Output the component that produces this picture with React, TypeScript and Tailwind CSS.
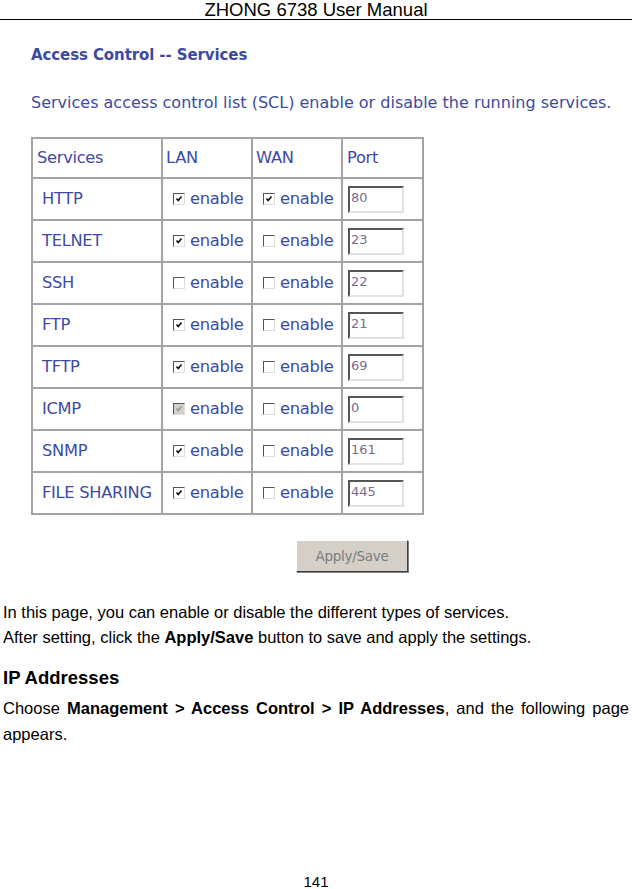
import React from "react"

type Row = { name: string; lan: "on" | "off" | "dis"; wan: boolean; port: string }

const rows: Row[] = [
  { name: "HTTP", lan: "on", wan: true, port: "80" },
  { name: "TELNET", lan: "on", wan: false, port: "23" },
  { name: "SSH", lan: "off", wan: false, port: "22" },
  { name: "FTP", lan: "on", wan: false, port: "21" },
  { name: "TFTP", lan: "on", wan: false, port: "69" },
  { name: "ICMP", lan: "dis", wan: false, port: "0" },
  { name: "SNMP", lan: "on", wan: false, port: "161" },
  { name: "FILE SHARING", lan: "on", wan: false, port: "445" },
]

const Box = ({ state }: { state: "on" | "off" | "dis" }) => (
  <span
    className={
      "inline-flex items-center justify-center w-[12px] h-[12px] border border-t-[#555] border-l-[#555] border-r-[#ddd] border-b-[#ddd] " +
      (state === "dis" ? "bg-[#d4d0c8]" : "bg-white")
    }
  >
    {state !== "off" && (
      <svg width="8" height="8" viewBox="0 0 8 8">
        <path d="M1.5 3.5 L3.2 5.5 L6.5 1.5" fill="none" stroke={state === "dis" ? "#999" : "#111"} strokeWidth="1.6" />
      </svg>
    )}
  </span>
)

const Enable = ({ state }: { state: "on" | "off" | "dis" }) => (
  <div className="flex items-center gap-[5px] pl-[10px]">
    <Box state={state} />
    <span>enable</span>
  </div>
)

const cell = "border-2 border-[#a3a3a3] align-middle"

export default function App() {
  return (
    <div className="w-[632px] h-[889px] bg-white relative flex flex-col">
      <div className="text-center text-[18.5px] leading-[19px] text-black font-['Liberation_Sans',Arial,sans-serif] border-b border-black">
        ZHONG 6738 User Manual
      </div>

      <div className="pl-[31px] font-['DejaVu_Sans',Tahoma,sans-serif] text-[#3d4aa3]">
        <div className="mt-[25px] text-[15px] font-bold leading-[20px] tracking-[-0.1px]">Access Control -- Services</div>
        <div className="mt-[28px] text-[16px] leading-[20px]">
          Services access control list (SCL) enable or disable the running services.
        </div>

        <table className="mt-[24px] border-collapse border-2 border-[#a3a3a3] text-[16.3px] tracking-[-0.3px]">
          <tbody>
            <tr className="h-[40px]">
              <td className={cell + " w-[130px] pl-[4px]"}>Services</td>
              <td className={cell + " w-[90px] pl-[3px]"}>LAN</td>
              <td className={cell + " w-[90px] pl-[3px]"}>WAN</td>
              <td className={cell + " w-[81px] pl-[4px]"}>Port</td>
            </tr>
            {rows.map((r) => (
              <tr key={r.name} className="h-[42px]">
                <td className={cell + " pl-[9px]"}>{r.name}</td>
                <td className={cell}>
                  <Enable state={r.lan} />
                </td>
                <td className={cell}>
                  <Enable state={r.wan ? "on" : "off"} />
                </td>
                <td className={cell + " pl-[5px]"}>
                  <div className="w-[56px] h-[27px] border-2 border-t-[#555] border-l-[#555] border-r-[#e0e0e0] border-b-[#e0e0e0] bg-white text-[13px] text-[#7a6a90] leading-[20px] pl-[1px] tracking-normal">
                    {r.port}
                  </div>
                </td>
              </tr>
            ))}
          </tbody>
        </table>

        <div className="flex justify-end w-[377px] mt-[25px]">
          <div className="w-[112px] h-[32px] bg-[#d4d0c8] border border-t-white border-l-white border-r-[#404040] border-b-[#404040] shadow-[1px_1px_0_#808080] flex items-center justify-center text-[13.5px] text-[#7b7a80] tracking-[-0.3px]">
            Apply/Save
          </div>
        </div>
      </div>

      <div className="mt-[28px] px-[3px] font-['Liberation_Sans',Arial,sans-serif] text-black text-[16.5px] leading-[25px]">
        <p>In this page, you can enable or disable the different types of services.</p>
        <p>
          After setting, click the <b>Apply/Save</b> button to save and apply the settings.
        </p>
        <h2 className="mt-[15px] text-[18.5px] font-bold leading-[26px]">IP Addresses</h2>
        <p className="mt-[4px] text-justify [text-align-last:justify] leading-[26px]">
          Choose <b>Management &gt; Access Control &gt; IP Addresses</b>, and the following page
        </p>
        <p className="leading-[26px]">appears.</p>
      </div>

      <div className="mt-auto mb-[-1px] text-center text-[15px] leading-[16px] font-['Liberation_Sans',Arial,sans-serif] text-black">
        141
      </div>
    </div>
  )
}
